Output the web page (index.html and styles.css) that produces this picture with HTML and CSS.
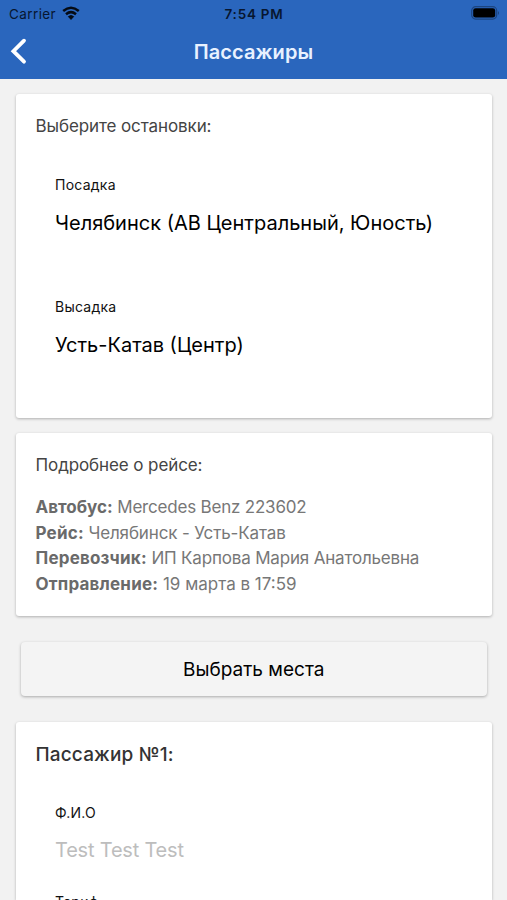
FILE: index.html
```html
<!DOCTYPE html>
<html lang="ru">
<head>
<meta charset="utf-8">
<title>Пассажиры</title>
<link rel="stylesheet" href="styles.css">
</head>
<body>
<header class="header">
  <div class="status">
    <div class="carrier"><span class="carrier-name">Carrier</span>
      <svg class="wifi" viewBox="0 0 18 14" width="18" height="14"><path d="M9 13.4 6.4 10.6Q9 8.6 11.6 10.6Z" fill="#050b14" stroke="#050b14" stroke-linejoin="round"/><path d="M4 8.2Q9 4 14 8.2M1.2 5Q9-1.6 16.8 5" fill="none" stroke="#050b14" stroke-width="2.5"/></svg>
    </div>
    <span class="time">7:54 PM</span>
    <svg class="battery" viewBox="0 0 29 14" width="29" height="14"><rect x=".7" y=".7" width="25" height="12.4" rx="4" fill="none" stroke="#1c4580" stroke-width="1.2"/><rect x="2.2" y="2.2" width="22" height="9.4" rx="2.4" fill="#000"/><path d="M27 5q2 2 0 4z" fill="#1c4580"/></svg>
  </div>
  <div class="nav">
    <svg class="back" viewBox="0 0 18 28" width="18" height="28"><path d="M14 3.7 3.4 14.2 14 24.7" fill="none" stroke="#fff" stroke-width="3.8" stroke-linecap="round"/></svg>
    <h1 class="title">Пассажиры</h1>
  </div>
</header>
<main class="content">
  <section class="card stops">
    <h2 class="heading">Выберите остановки:</h2>
    <div class="field"><span class="label">Посадка</span><span class="value">Челябинск (АВ Центральный, Юность)</span></div>
    <div class="field"><span class="label">Высадка</span><span class="value">Усть-Катав (Центр)</span></div>
  </section>
  <section class="card trip">
    <h2 class="heading">Подробнее о рейсе:</h2>
    <div class="details">
      <p class="bus"><b>Автобус:</b> Mercedes Benz 223602</p>
      <p class="route"><b>Рейс:</b> Челябинск - Усть-Катав</p>
      <p class="carrier-info"><b>Перевозчик:</b> ИП Карпова Мария Анатольевна</p>
      <p class="departure"><b>Отправление:</b> 19 марта в 17:59</p>
    </div>
  </section>
  <button class="choose">Выбрать места</button>
  <section class="card passenger">
    <h2 class="heading strong">Пассажир №1:</h2>
    <div class="field"><span class="label">Ф.И.О</span><span class="value placeholder">Test Test Test</span></div>
    <div class="field"><span class="label">Тариф</span></div>
  </section>
</main>
</body>
</html>
```
FILE: styles.css
```css
* { box-sizing: border-box; }
body { margin: 0; height: 900px; overflow: hidden; display: flex; flex-direction: column; background: #f2f2f2; font-family: Inter, "Liberation Sans", sans-serif; color: #000; }
h1, h2, p { margin: 0; font-weight: 400; }
.header { height: 79px; flex: none; background: #2a66bd; }
.status { height: 27px; display: grid; grid-template-columns: 1fr auto 1fr; align-items: center; padding: 0 8px 0 9px; font-size: 13.5px; color: #071630; }
.carrier { display: flex; align-items: center; gap: 6px; }
.carrier-name { letter-spacing: .4px; }
.wifi { margin-bottom: 2px; }
.time { font-weight: 600; font-size: 13.5px; letter-spacing: .75px; }
.battery { justify-self: end; margin-right: -1px; margin-bottom: 1px; }
.nav { height: 50px; display: grid; grid-template-columns: 40px 1fr 40px; align-items: center; }
.back { margin: -2px 0 0 10px; }
.title { text-align: center; font-size: 20px; font-weight: 600; color: #e8f1ff; letter-spacing: .1px; }
.content { flex: 1; min-height: 0; padding: 15px 15px 0 15.5px; display: flex; flex-direction: column; }
.card { background: #fff; border-radius: 3px; box-shadow: 0 1px 3px rgba(0,0,0,.28); padding: 20px; flex: none; }
.stops { height: 324px; margin-bottom: 15px; }
.trip { height: 183px; margin-bottom: 26px; }
.heading { font-size: 17px; line-height: 24px; color: #444; letter-spacing: -.1px; }
.strong { font-size: 19px; font-weight: 500; line-height: 25px; color: #333; letter-spacing: .15px; }
.field { display: flex; flex-direction: column; align-items: flex-start; padding: 37px 0 0 19.5px; height: 122px; }
.label { font-size: 14px; line-height: 20px; color: #111; letter-spacing: .25px; }
.value { font-size: 20px; line-height: 28px; margin-top: 14px; white-space: nowrap; }
.placeholder { color: #bdbdbd; letter-spacing: -.2px; }
.details { margin-top: 18px; font-size: 17px; line-height: 25.7px; color: #777; white-space: nowrap; }
.details b { color: #6a6a6a; letter-spacing: 0; }
.bus { letter-spacing: -.2px; }
.route { letter-spacing: -.13px; }
.carrier-info { letter-spacing: -.18px; }
.route b, .carrier-info b, .departure b { letter-spacing: .2px; }
.choose { flex: none; margin: 0 5px 26px; height: 54px; border: 0; border-radius: 4px; background: #f4f4f4; box-shadow: 0 1px 3px rgba(0,0,0,.3); font: 400 19px Inter, "Liberation Sans", sans-serif; color: #000; }
.passenger { flex: 1; min-height: 0; padding-bottom: 0; border-radius: 3px 3px 0 0; overflow: hidden; }
.passenger .field { height: 89px; padding-top: 36px; }
.passenger .value { margin-top: 13px; }
```
